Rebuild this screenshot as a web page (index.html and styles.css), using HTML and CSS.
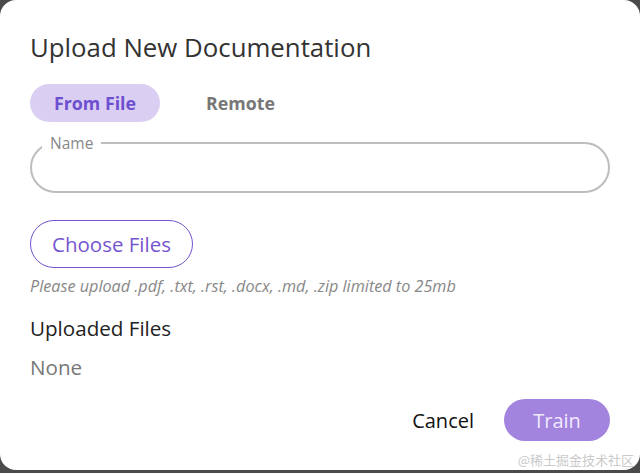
FILE: index.html
```html
<!DOCTYPE html>
<html lang="en">
<head>
    <meta charset="UTF-8">
    <title>Upload New Documentation</title>
    <link rel="stylesheet" href="styles.css">
</head>
<body>
    <div class="modal">
        <h1 class="title">Upload New Documentation</h1>

        <div class="tabs">
            <button class="tab active">From File</button>
            <button class="tab">Remote</button>
        </div>

        <fieldset class="field">
            <legend>Name</legend>
            <input type="text">
        </fieldset>

        <button class="choose">Choose Files</button>
        <p class="hint">Please upload .pdf, .txt, .rst, .docx, .md, .zip limited to 25mb</p>

        <h2 class="uploaded">Uploaded Files</h2>
        <p class="none">None</p>

        <div class="actions">
            <button class="cancel">Cancel</button>
            <button class="train">Train</button>
        </div>

        <span class="watermark">@稀土掘金技术社区</span>
    </div>
</body>
</html>
```

FILE: styles.css
```css
* {
    box-sizing: border-box;
    margin: 0;
    padding: 0;
}

body {
    background-color: #4a4a4a;
    font-family: 'Open Sans', 'Noto Sans', sans-serif;
    color: #2b2b2b;
}

.modal {
    position: relative;
    background: white;
    border-radius: 16px;
    height: 470px;
    padding: 30px 30px 0;
    display: flex;
    flex-direction: column;
}

.title {
    font-size: 25.8px;
    font-weight: 400;
    line-height: 34px;
    color: #333;
}

.tabs {
    display: flex;
    gap: 22px;
    margin-top: 20px;
}

.tab {
    font-family: inherit;
    font-size: 17.8px;
    font-weight: 700;
    height: 38px;
    padding: 0 24px;
    border: none;
    border-radius: 19px;
    background: none;
    color: #777;
}

.tab.active {
    background: #dacff3;
    color: #6d4fd0;
}

.field {
    margin-top: 13px;
    border: 2px solid #bdbdbd;
    border-radius: 26px;
    height: 58px;
    padding: 0 10px;
}

.field legend {
    font-size: 15.5px;
    color: #888;
    padding: 0 8px;
    line-height: 16px;
}

.field input {
    border: none;
    outline: none;
    width: 100%;
    height: 36px;
    font-size: 16px;
    font-family: inherit;
}

.choose {
    align-self: flex-start;
    margin-top: 27px;
    height: 48px;
    padding: 0 21px;
    font-family: inherit;
    font-size: 20.5px;
    color: #7454cf;
    background: white;
    border: 1px solid #7454cf;
    border-radius: 24px;
}

.hint {
    margin-top: 8px;
    font-size: 16.2px;
    font-style: italic;
    color: #888;
    line-height: 20px;
}

.uploaded {
    margin-top: 19px;
    font-size: 20.6px;
    font-weight: 400;
    color: #222;
    line-height: 26px;
}

.none {
    margin-top: 13px;
    font-size: 20.6px;
    color: #777;
    line-height: 26px;
}

.actions {
    display: flex;
    justify-content: flex-end;
    align-items: center;
    gap: 30px;
    margin-top: 19px;
}

.cancel {
    font-family: inherit;
    font-size: 20px;
    color: #111;
    background: none;
    border: none;
}

.train {
    font-family: inherit;
    font-size: 20px;
    color: #f1e9ff;
    background: #a283de;
    border: none;
    border-radius: 22px;
    height: 42px;
    width: 106px;
}

.watermark {
    position: absolute;
    right: 6px;
    bottom: 1px;
    font-family: 'Noto Sans CJK SC', sans-serif;
    font-size: 13px;
    color: #cacaca;
}
```
